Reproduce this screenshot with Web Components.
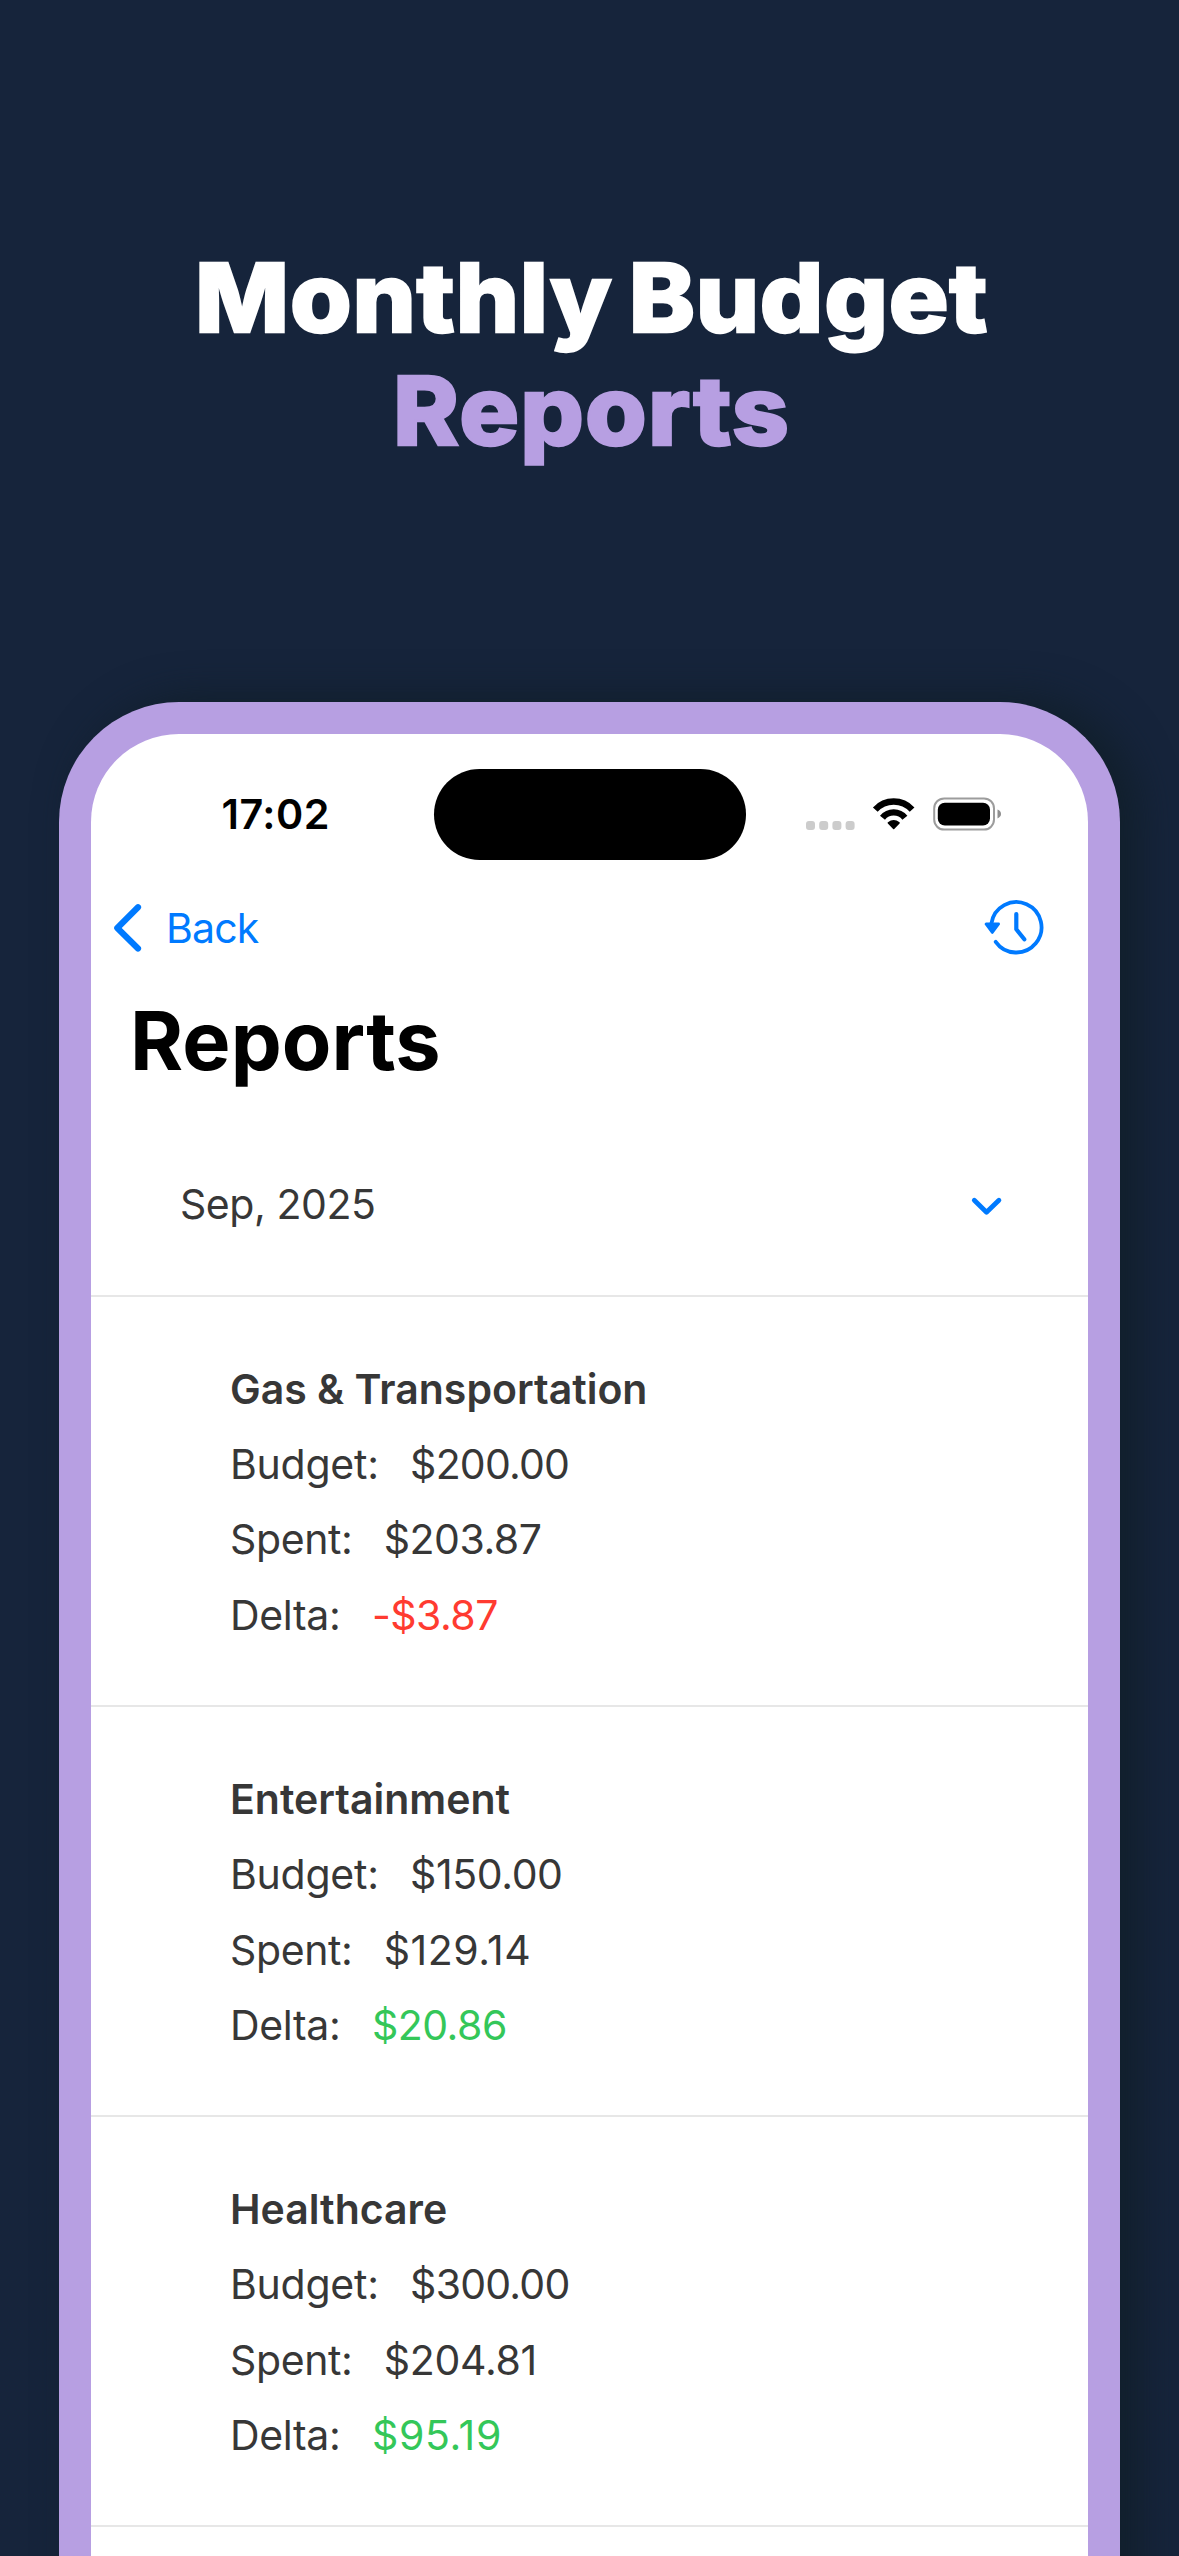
<!DOCTYPE html>
<html lang="en">
<head>
<meta charset="utf-8">
<title>Monthly Budget Reports</title>
<style>
  html, body { margin: 0; height: 2556px; overflow: hidden; background: #16243b; }
  body { font-family: Inter, "Liberation Sans", sans-serif; color: #373737; }
</style>
</head>
<body>
<promo-page>
  <promo-heading slot="heading" accent="Reports">Monthly Budget</promo-heading>
  <phone-frame>
    <status-bar time="17:02"></status-bar>
    <nav-bar back="Back"></nav-bar>
    <screen-title>Reports</screen-title>
    <month-select>Sep, 2025</month-select>
    <budget-item name="Gas &amp; Transportation">
      <amount-row label="Budget:" style="--ls:-.25px;--vs:-.77px">$200.00</amount-row>
      <amount-row label="Spent:" style="--ls:-.39px;--vs:-.5px">$203.87</amount-row>
      <amount-row label="Delta:" tone="over" style="--ls:-.33px;--vs:-.5px">-$3.87</amount-row>
    </budget-item>
    <budget-item name="Entertainment">
      <amount-row label="Budget:" style="--ls:-.25px;--vs:-.39px">$150.00</amount-row>
      <amount-row label="Spent:" style="--ls:-.39px;--vs:.5px">$129.14</amount-row>
      <amount-row label="Delta:" tone="under" style="--ls:-.33px;--vs:-.48px">$20.86</amount-row>
    </budget-item>
    <budget-item name="Healthcare">
      <amount-row label="Budget:" style="--ls:-.25px;--vs:-.77px">$300.00</amount-row>
      <amount-row label="Spent:" style="--ls:-.39px;--vs:-.3px">$204.81</amount-row>
      <amount-row label="Delta:" tone="under" style="--ls:-.33px;--vs:.7px">$95.19</amount-row>
    </budget-item>
  </phone-frame>
</promo-page>
<script>
  const define = (tag, render) => customElements.define(tag, class extends HTMLElement {
    connectedCallback() {
      if (this.shadowRoot) return;
      const t = document.createElement('template');
      t.innerHTML = render(n => (this.getAttribute(n) || '').replace(/&/g, '&amp;'));
      this.attachShadow({ mode: 'open' }).append(t.content.cloneNode(true));
    }
  });

  define('promo-page', () => `
    <style>
      :host { display: flex; flex-direction: column; height: 2556px; overflow: hidden; }
      header { height: 461px; padding-top: 241px; flex: none; }
      main { flex: 1; min-height: 0; display: flex; padding: 0 59px; }
    </style>
    <header><slot name="heading"></slot></header>
    <main><slot></slot></main>`);

  define('promo-heading', a => `
    <style>
      :host { display: block; }
      h1 { margin: 0; display: flex; flex-direction: column; align-items: center;
           font-size: 95px; font-weight: 800; line-height: 113px; color: #fff;
           letter-spacing: .7px; word-spacing: -6px; padding-left: 4px; stroke-linejoin: round;
           -webkit-text-stroke: 2.4px currentColor; white-space: nowrap; transform: scaleX(1.05); }
      em { font-style: normal; color: #b79fe2; letter-spacing: 1.1px; }
    </style>
    <h1><span><slot></slot></span><em>${a('accent')}</em></h1>`);

  define('phone-frame', () => `
    <style>
      :host { display: flex; flex-direction: column; box-sizing: border-box; width: 1061px; height: 1900px;
              border: 32px solid #b79fe2; border-bottom: 0; border-radius: 120px 120px 0 0;
              background: #fff; box-shadow: 18px -4px 40px #111f2b; }
      ::slotted(*) { flex: none; }
    </style>
    <slot></slot>`);

  define('status-bar', a => `
    <style>
      :host { display: grid; grid-template-columns: 343px 312px 1fr; align-items: center; height: 160px; color: #000; }
      time { padding-left: 130.5px; font-size: 41.3px; font-weight: 600; line-height: 50px; letter-spacing: .5px; }
      .island { height: 91px; border-radius: 46px; background: #000; }
      svg { margin-left: 54px; width: 208px; height: 50px; display: block; }
    </style>
    <time>${a('time')}</time>
    <div class="island"></div>
    <svg viewBox="800 789 208 50">
      <g fill="#ccc">
        <rect x="806" y="821" width="9" height="9" rx="3"/><rect x="819.2" y="821" width="9" height="9" rx="3"/>
        <rect x="832.4" y="821" width="9" height="9" rx="3"/><rect x="845.6" y="821" width="9" height="9" rx="3"/>
      </g>
      <g fill="none" stroke="#000" stroke-width="6.4">
        <path d="M875.3 809.6A25 25 0 0 1 912.1 809.6"/>
        <path d="M882.5 817.7A14.4 14.4 0 0 1 904.9 817.7"/>
      </g>
      <path d="M888.4 822.9Q893.7 818.7 899 822.9L893.7 828.4Z" stroke="#000" stroke-width="1.6" stroke-linejoin="round"/>
      <rect x="934.2" y="798.4" width="59.8" height="31.2" rx="10" fill="none" stroke="#9c9c9c" stroke-width="2"/>
      <rect x="937.8" y="802.7" width="52.2" height="22.8" rx="7"/>
      <path d="M997.5 809.6Q1001 811 1001 814T997.5 818.4Z" fill="#8f8f8f"/>
    </svg>`);

  define('nav-bar', a => `
    <style>
      :host { display: flex; align-items: center; justify-content: space-between; height: 68px;
              padding: 0 43px 0 20px; color: #007aff; }
      .back { display: flex; align-items: center; gap: 22px; }
      span { font-size: 41px; line-height: 50px; letter-spacing: -.8px; }
      svg { display: block; fill: none; stroke: currentColor; stroke-linecap: round; stroke-linejoin: round; }
    </style>
    <div class="back">
      <svg width="33" height="56" viewBox="111 900 33 56" stroke-width="6.2"><path d="M138 907.3L117.3 928L138 948.5"/></svg>
      <span>${a('back')}</span>
    </div>
    <svg width="66" height="64" viewBox="979 896 66 64" stroke-width="3.8">
      <path d="M991.4 923.5A25.2 25.2 0 1 1 995.7 941.8"/>
      <path d="M1016.3 914V929.3L1024.3 939.3" stroke-width="4.2"/>
      <path d="M986 924H998.6L992.3 932.5Z" fill="currentColor" stroke-width="2.8"/>
    </svg>`);

  define('screen-title', () => `
    <style>
      :host { display: block; margin-top: 30px; padding-left: 39px; font-size: 81px; font-weight: 700;
              line-height: 98px; letter-spacing: .09px; color: #000; }
    </style>
    <slot></slot>`);

  define('month-select', () => `
    <style>
      :host { display: flex; align-items: center; justify-content: space-between; height: 179.5px; margin-top: 25px;
              padding: 0 85px 0 89px; border-bottom: 2px solid #e7e7e7;
              font-size: 41px; line-height: 50px; letter-spacing: -.44px; }
      span { padding-bottom: 2px; }
      svg { display: block; margin-top: 3px; }
    </style>
    <span><slot></slot></span>
    <svg width="33" height="22" viewBox="970 1195 33 22" fill="none" stroke="#007aff" stroke-width="4.8"
         stroke-linecap="round" stroke-linejoin="round"><path d="M974.3 1200.2L986.5 1212.2L998.9 1200.2"/></svg>`);

  define('budget-item', a => `
    <style>
      :host { display: flex; flex-direction: column; box-sizing: border-box; height: 410.25px;
              padding: 55px 0 0 139px; border-bottom: 2px solid #e7e7e7; font-size: 41px; line-height: 75.4px; }
      h2 { margin: 0; font-size: inherit; font-weight: 600; }
    </style>
    <h2>${a('name')}</h2><slot></slot>`);

  define('amount-row', a => `
    <style>
      :host { display: flex; gap: 31.4px; white-space: nowrap; }
      .label { letter-spacing: var(--ls); }
      .value { letter-spacing: var(--vs); }
      :host([tone=over]) .value { color: #ff3b30; }
      :host([tone=under]) .value { color: #34c759; }
    </style>
    <span class="label">${a('label')}</span><span class="value"><slot></slot></span>`);
</script>
</body>
</html>
